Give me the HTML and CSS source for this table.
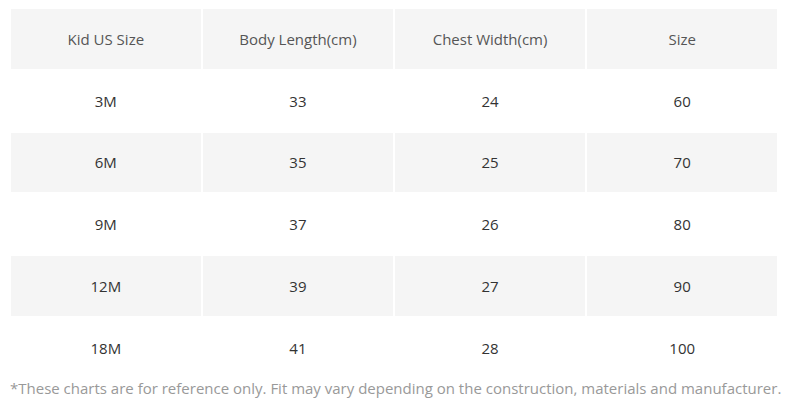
FILE: index.html
```html
<!DOCTYPE html>
<html>
<head>
<meta charset="utf-8">
<link rel="stylesheet" href="styles.css">
</head>
<body>
<div class="chart">
  <div class="row head">
    <div class="cell">Kid US Size</div>
    <div class="cell">Body Length(cm)</div>
    <div class="cell">Chest Width(cm)</div>
    <div class="cell">Size</div>
  </div>
  <div class="row">
    <div class="cell">3M</div><div class="cell">33</div><div class="cell">24</div><div class="cell">60</div>
  </div>
  <div class="row shade">
    <div class="cell">6M</div><div class="cell">35</div><div class="cell">25</div><div class="cell">70</div>
  </div>
  <div class="row">
    <div class="cell">9M</div><div class="cell">37</div><div class="cell">26</div><div class="cell">80</div>
  </div>
  <div class="row shade">
    <div class="cell">12M</div><div class="cell">39</div><div class="cell">27</div><div class="cell">90</div>
  </div>
  <div class="row">
    <div class="cell">18M</div><div class="cell">41</div><div class="cell">28</div><div class="cell">100</div>
  </div>
</div>
<p class="note">*These charts are for reference only. Fit may vary depending on the construction, materials and manufacturer.</p>
</body>
</html>
```
FILE: styles.css
```css
html, body {
  margin: 0;
  padding: 0;
  background: #ffffff;
}
body {
  font-family: "Open Sans", "Liberation Sans", sans-serif;
  font-size: 15px;
  color: #333333;
  width: 800px;
  height: 405px;
  overflow: hidden;
}
.chart {
  margin: 9px 0 0 11px;
  width: 766px;
  display: flex;
  flex-direction: column;
  gap: 2px;
}
.row {
  display: grid;
  grid-template-columns: repeat(4, 1fr);
  column-gap: 2.5px;
  height: 59.8px;
}
.cell {
  display: flex;
  align-items: center;
  justify-content: center;
}
.head .cell,
.shade .cell {
  background: #f5f5f5;
}
.head .cell {
  color: #555555;
}
.note {
  margin: 0 0 0 10px;
  text-align: center;
  color: #999999;
  font-size: 15px;
  line-height: 20px;
  width: 768px;
  white-space: nowrap;
}
```
